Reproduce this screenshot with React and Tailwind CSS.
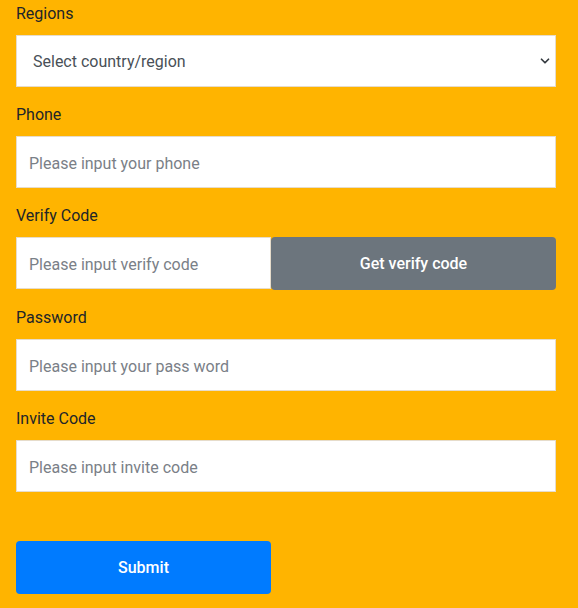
import { ChevronDown } from 'lucide-react';

const Field = ({ label, children }) => (
  <div className="mb-[16px]">
    <label className="block text-base leading-6 text-[#212529] mb-[9px]">{label}</label>
    {children}
  </div>
);

const inputCls =
  'block w-full h-[52px] bg-white border border-[#e6dccb] px-3 pt-[2px] text-base text-[#495057] placeholder-[#7a8087] outline-none';

export default function App() {
  return (
    <div className="min-h-screen w-full bg-[#ffb400] px-4 pt-[2px] font-['Roboto',sans-serif]">
      <div className="w-[540px]">
        <Field label="Regions">
          <div className="relative">
            <select
              defaultValue=""
              className="block w-full h-[52px] appearance-none bg-white border border-[#e6dccb] pl-4 pr-8 pt-[2px] text-base text-[#495057] outline-none"
            >
              <option value="">Select country/region</option>
            </select>
            <ChevronDown
              className="absolute right-[4px] top-1/2 -translate-y-1/2 w-[14px] h-[14px] text-[#343a40] pointer-events-none"
              strokeWidth={3}
            />
          </div>
        </Field>

        <Field label="Phone">
          <input className={inputCls} placeholder="Please input your phone" />
        </Field>

        <Field label="Verify Code">
          <div className="flex">
            <input
              className="block w-[255px] h-[52px] bg-white border border-[#e6dccb] px-3 pt-[2px] text-base text-[#495057] placeholder-[#7a8087] outline-none"
              placeholder="Please input verify code"
            />
            <button className="flex-1 h-[53px] rounded-[4px] bg-[#6c757d] text-white text-base font-medium">
              Get verify code
            </button>
          </div>
        </Field>

        <Field label="Password">
          <input className={inputCls} placeholder="Please input your pass word" />
        </Field>

        <Field label="Invite Code">
          <input className={inputCls} placeholder="Please input invite code" />
        </Field>

        <button className="mt-[33px] w-[255px] h-[53px] rounded-[4px] bg-[#007bff] text-white text-base font-medium">
          Submit
        </button>
      </div>
    </div>
  );
}
